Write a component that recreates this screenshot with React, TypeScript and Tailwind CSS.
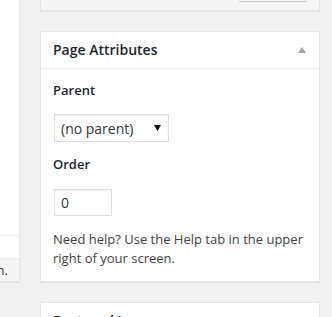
import React from "react";

function Caret({ className }: { className?: string }) {
  return (
    <svg className={className} width="8" height="6" viewBox="0 0 8 6">
      <path d="M0 6 L4 0 L8 6 Z" fill="currentColor" />
    </svg>
  );
}

function SelectArrow() {
  return (
    <svg width="7" height="6" viewBox="0 0 7 6">
      <path d="M0 0 L7 0 L3.5 6 Z" fill="#111" />
    </svg>
  );
}

export default function App() {
  return (
    <div
      className="w-[332px] h-[317px] overflow-hidden bg-[#f1f1f1] flex items-start text-[13px] text-[#444]"
      style={{ fontFamily: '"Open Sans", "Liberation Sans", sans-serif' }}
    >
      {/* Left panel, cut off by the viewport */}
      <div className="w-[20px] h-[282px] shrink-0 flex flex-col bg-white border-r border-b border-[#e5e5e5] shadow-[0_1px_1px_rgba(0,0,0,0.04)]">
        <div className="flex-1" />
        <div className="h-[23px] shrink-0 border-t border-[#eee]" />
        <div className="h-[23px] shrink-0 border-t border-[#eee] bg-[#f5f5f5] flex items-center justify-end overflow-hidden whitespace-nowrap">
          <span className="pr-[11px] leading-none">n.</span>
        </div>
      </div>

      <div className="ml-[20px] w-[280px] shrink-0 flex flex-col">
        {/* Previous box, cut off */}
        <div className="h-[11px] shrink-0 bg-[#f5f5f5] border-x border-b border-[#e5e5e5] shadow-[0_1px_1px_rgba(0,0,0,0.04)] flex justify-end pr-[12px]">
          <div className="w-[68px] h-[2px] border-b border-[#ccc] bg-[#f7f7f7]" />
        </div>

        {/* Page Attributes */}
        <div className="mt-[20px] shrink-0 bg-white border border-[#e5e5e5] shadow-[0_1px_1px_rgba(0,0,0,0.04)]">
          <div className="flex items-center justify-between px-[12px] py-[8px] border-b border-[#eee]">
            <h2 className="text-[14px] leading-[1.4] font-semibold text-[#23282d]">Page Attributes</h2>
            <Caret className="text-[#a0a5aa] mr-[1px]" />
          </div>
          <div className="px-[12px] pt-[12px] pb-[12px]">
            <p className="leading-[1.5] font-semibold text-[#23282d]">Parent</p>
            <div className="mt-[14px] ml-[1px] w-[115px] h-[28px] border border-[#ddd] shadow-[inset_0_1px_2px_rgba(0,0,0,0.07)] flex items-center justify-between pl-[6px] pr-[7px] text-[14px] text-[#32373c]">
              <span>(no parent)</span>
              <SelectArrow />
            </div>
            <p className="mt-[13px] leading-[1.5] font-semibold text-[#23282d]">Order</p>
            <div className="mt-[14px] ml-[1px] w-[58px] h-[27px] border border-[#ddd] shadow-[inset_0_1px_2px_rgba(0,0,0,0.07)] flex items-center pl-[6px] text-[14px] text-[#32373c]">
              0
            </div>
            <p className="mt-[14px] leading-[1.5]">
              Need help? Use the Help tab in the upper right of your screen.
            </p>
          </div>
        </div>

        {/* Featured Image */}
        <div className="mt-[20px] shrink-0 bg-white border border-[#e5e5e5]">
          <div className="px-[12px] py-[8px] border-b border-[#eee]">
            <h2 className="text-[14px] leading-[1.4] font-semibold text-[#23282d]">Featured Image</h2>
          </div>
        </div>
      </div>
    </div>
  );
}
